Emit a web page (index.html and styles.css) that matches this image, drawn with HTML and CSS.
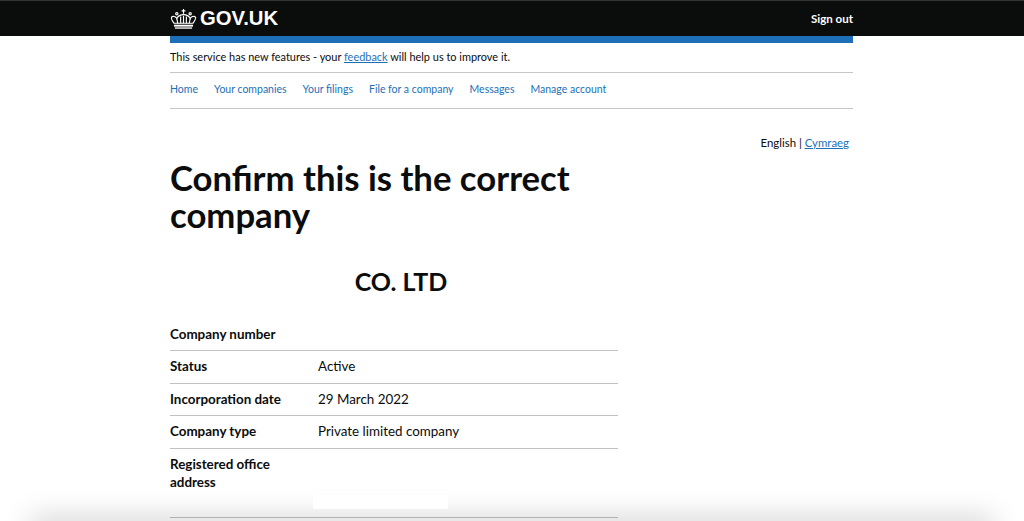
FILE: index.html
```html
<!DOCTYPE html>
<html lang="en">
<head>
    <meta charset="UTF-8">
    <title>Confirm this is the correct company</title>
    <link rel="stylesheet" href="styles.css">
</head>
<body>
    <!-- black header -->
    <header class="top-bar">
        <div class="wrap top-bar-inner">
            <a class="logo" href="#">
                <svg class="crown" viewBox="0 0 28 22" width="27" height="21" fill="none" stroke="#fff" stroke-width="1.2">
                    <path d="M14 1v5M12 3h4"/>
                    <circle cx="7" cy="6" r="1.200"/>
                    <circle cx="21" cy="6" r="1.200"/>
                    <path d="M4 16C2 13 .5 11 1.500 9.500 3 8 6 9 7 11c1-2 4-4 7-4s6 2 7 4c1-2 4-3 5.500-1.500C27.500 11 26 13 24 16z"/>
                    <path d="M7 11l1 5M11 9v7M14 8v8M17 9v7M21 11l-1 5"/>
                    <path d="M4 18.500h20" stroke-width="2"/>
                    <path d="M5 21h18" stroke-width="1.400"/>
                </svg>
                <span>GOV.UK</span>
            </a>
            <a class="sign-out" href="#">Sign out</a>
        </div>
    </header>

    <div class="wrap">
        <div class="blue-strip"></div>
        <p class="beta">This service has new features - your <a href="#">feedback</a> will help us to improve it.</p>

        <nav class="nav">
            <a href="#">Home</a>
            <a href="#">Your companies</a>
            <a href="#">Your filings</a>
            <a href="#">File for a company</a>
            <a href="#">Messages</a>
            <a href="#">Manage account</a>
        </nav>

        <div class="lang">English | <a href="#">Cymraeg</a></div>

        <main class="content">
            <h1>Confirm this is the correct company</h1>
            <h2>CO. LTD</h2>

            <dl class="summary">
                <div class="row"><dt>Company number</dt><dd></dd></div>
                <div class="row"><dt>Status</dt><dd>Active</dd></div>
                <div class="row"><dt>Incorporation date</dt><dd>29 March 2022</dd></div>
                <div class="row"><dt>Company type</dt><dd>Private limited company</dd></div>
                <div class="row address"><dt>Registered office address</dt><dd></dd></div>
            </dl>
        </main>
    </div>

    <div class="bottom-shadow"></div>
    <div class="patch"></div>
</body>
</html>
```

FILE: styles.css
```css
html, body {
    height: 100%;
    overflow: hidden;
}

body {
    margin: 0;
    background: #fff;
    color: #0b0c0c;
    font-family: Lato, 'Liberation Sans', sans-serif;
    font-size: 12px;
}

a {
    color: #1d70b8;
}

.wrap {
    width: 683px;
    margin-left: 170px;
}

/* header */
.top-bar {
    height: 36px;
    background: #0b0c0c;
    border-top: 1px solid #333;
    box-sizing: border-box;
}

.top-bar-inner {
    display: flex;
    justify-content: space-between;
    align-items: center;
    height: 35px;
}

.logo {
    display: flex;
    align-items: center;
    gap: 3px;
    color: #fff;
    font-family: 'Liberation Sans', sans-serif;
    font-size: 20.300px;
    font-weight: 700;
    text-decoration: none;
}

.sign-out {
    color: #fff;
    font-size: 11.500px;
    font-weight: 700;
    text-decoration: none;
}

.blue-strip {
    height: 7px;
    background: #1d70b8;
}

.beta {
    margin: 0;
    height: 29px;
    line-height: 28px;
    border-bottom: 1px solid #c4c6c8;
    font-size: 10.950px;
}

/* navigation */
.nav {
    display: flex;
    gap: 16px;
    height: 36px;
    box-sizing: border-box;
    padding-bottom: 3px;
    align-items: center;
    border-bottom: 1px solid #c4c6c8;
}

.nav a {
    font-size: 10.500px;
    text-decoration: none;
}

.lang {
    margin-top: 26px;
    padding-right: 4px;
    text-align: right;
    font-size: 11.400px;
    line-height: 15px;
}

/* main content */
.content {
    width: 448px;
}

h1 {
    margin: 9px 0 0;
    font-family: Lato, 'Liberation Sans', sans-serif;
    font-size: 34.700px;
    line-height: 37px;
    font-weight: 700;
}

h2 {
    margin: 33px 0 0;
    text-align: center;
    padding-left: 14px;
    font-family: Lato, 'Liberation Sans', sans-serif;
    font-size: 25px;
    line-height: 30px;
    font-weight: 700;
}

.summary {
    margin: 21px 0 0;
    font-size: 13.400px;
}

.row {
    display: flex;
    box-sizing: border-box;
    min-height: 33px;
    padding-bottom: 2px;
    align-items: center;
    border-bottom: 1px solid #c0c2c4;
}

.row:first-child {
    min-height: 34px;
    padding-bottom: 0;
}

.row:nth-child(3) {
    min-height: 32px;
}

.row.address {
    min-height: 69px;
    padding-bottom: 0;
    align-items: flex-start;
}

.row dt {
    width: 148px;
    font-weight: 700;
    line-height: 18px;
}

.row.address dt {
    padding-top: 6px;
    width: 120px;
}

.row dd {
    margin: 0;
}

/* soft shadow along the bottom of the window */
.bottom-shadow {
    position: fixed;
    left: 30px;
    right: 30px;
    bottom: -30px;
    height: 30px;
    box-shadow: 0 -6px 28px rgba(0, 0, 0, 0.15);
}

/* blanked-out block over the address */
.patch {
    position: fixed;
    left: 313px;
    top: 495px;
    width: 135px;
    height: 14px;
    background: #fff;
}
```
